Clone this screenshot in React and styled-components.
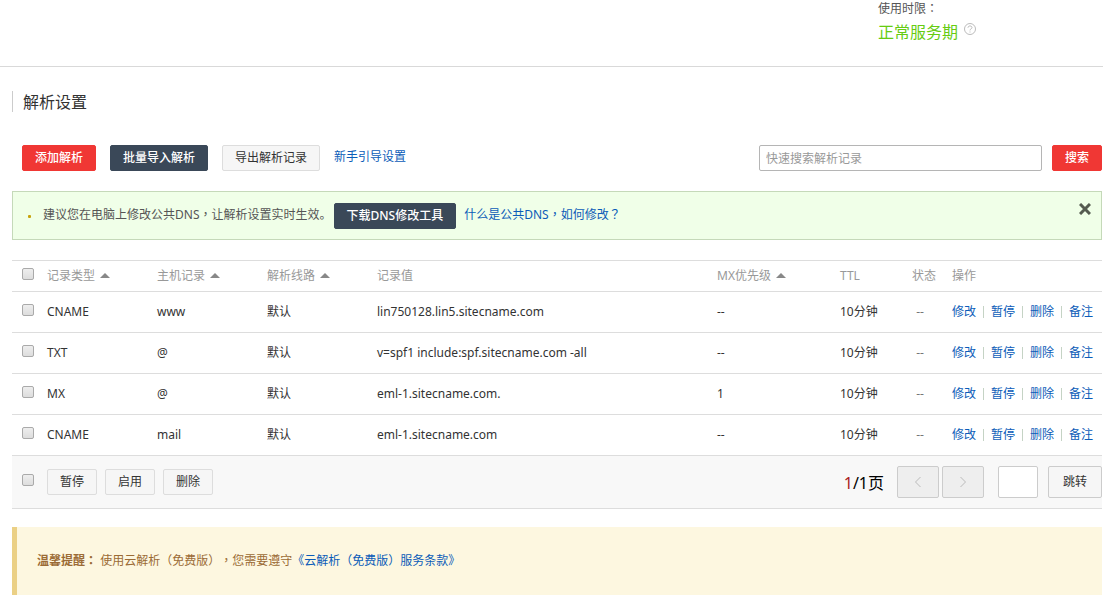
import { useState } from "react";
import styled, { createGlobalStyle, css } from "styled-components";

const GlobalStyle = createGlobalStyle`
  * {
    box-sizing: border-box;
  }
  body {
    margin: 0;
    background: #fff;
    color: #333;
    font: 12px/20px "Noto Sans", "Noto Sans CJK SC", sans-serif;
    text-spacing-trim: space-all;
  }
  button, input {
    font: inherit;
    color: inherit;
  }
  a {
    color: #0b5cb8;
    text-decoration: none;
  }
`;

const Page = styled.div`
  padding-right: 15px;
`;

const Status = styled.header`
  display: flex;
  justify-content: flex-end;
  height: 67px;
  border-bottom: 1px solid #d9d9d9;
`;

const StatusBox = styled.div`
  width: 225px;
  color: #555;
  line-height: 17px;
`;

const StatusValue = styled.div`
  display: flex;
  gap: 6px;
  color: #6c1;
  font-size: 16px;
  line-height: 30px;
`;

const HelpIcon = styled.svg`
  width: 12px;
  height: 12px;
  margin-top: 6px;
`;

const Content = styled.main`
  padding: 24px 1px 0 12px;
`;

const Title = styled.h1`
  margin: 0 0 33px;
  padding: 1px 0 0 10px;
  border-left: 1px solid #ccc;
  font-size: 16px;
  font-weight: 400;
  line-height: 20px;
`;

const Toolbar = styled.div`
  display: flex;
  align-items: flex-start;
  gap: 14px;
  padding-left: 10px;
  margin-bottom: 20px;
`;

const kinds = {
  red: css`
    background: #f03734;
    border-color: #f03734;
    color: #fff;
    font-weight: 500;
  `,
  dark: css`
    background: #3a4858;
    border-color: #3a4858;
    color: #fff;
    font-weight: 500;
  `,
  light: css`
    background: #f6f6f6;
    border-color: #ddd;
    color: #333;
  `,
};

const Button = styled.button`
  height: 26px;
  padding: 0 12px;
  border: 1px solid;
  border-radius: 2px;
  line-height: 24px;
  white-space: nowrap;
  cursor: pointer;
  ${(p) => kinds[p.$kind || "light"]}
`;

const GuideLink = styled.a`
  line-height: 24px;
`;

const Search = styled.form`
  display: flex;
  gap: 10px;
  margin-left: auto;
`;

const SearchInput = styled.input`
  width: 283px;
  height: 26px;
  padding: 0 6px;
  border: 1px solid #b5b5b5;
  border-radius: 2px;
  &::placeholder {
    color: #999;
  }
`;

const Tip = styled.div`
  display: flex;
  align-items: center;
  padding: 11px 10px 10px 15px;
  margin-bottom: 20px;
  border: 1px solid #c5d9b9;
  background: #f0ffe8;
  color: #555;
`;

const Dot = styled.i`
  width: 3px;
  height: 3px;
  margin-right: 12px;
  border-radius: 1px;
  background: #c9a30c;
`;

const TipText = styled.span`
  padding-bottom: 2px;
`;

const TipButton = styled(Button)`
  margin: 0 8px 0 2px;
`;

const Close = styled.button`
  display: flex;
  align-self: flex-start;
  margin-left: auto;
  padding: 0;
  border: 0;
  background: none;
  cursor: pointer;
`;

// centred full-width punctuation
const Punct = styled.span`
  font-family: "Noto Sans CJK TC", sans-serif;
  line-height: 1;
`;

const Table = styled.table`
  width: 100%;
  table-layout: fixed;
  border-collapse: collapse;
  border-top: 1px solid #ddd;
`;

const Col = styled.col`
  width: ${(p) => (p.$w ? p.$w + "px" : "auto")};
`;

const Th = styled.th`
  height: 31px;
  padding: 0;
  border-bottom: 1px solid #ddd;
  color: #999;
  font-weight: 400;
  text-align: left;
  white-space: nowrap;
`;

const Td = styled.td`
  height: 41px;
  padding: 0;
  border-bottom: 1px solid #ddd;
  white-space: nowrap;
`;

const StateTd = styled(Td)`
  padding-right: 24px;
  color: #777;
  text-align: center;
`;

const CheckWrap = styled.label`
  display: flex;
  padding: 0 0 5px 10px;
`;

const Check = styled.input`
  appearance: none;
  width: 12px;
  height: 12px;
  margin: 0;
  border: 1px solid #aaa;
  border-radius: 2px;
  background: linear-gradient(#eee, #ddd);
  &:checked {
    background: #3a4858;
  }
`;

const Arrow = styled.span`
  display: inline-block;
  margin-left: 5px;
  border: 5px solid transparent;
  border-top: 0;
  border-bottom-color: #888;
  vertical-align: 2px;
`;

const Actions = styled.div`
  display: flex;
  align-items: center;
`;

const Action = styled.a`
  & + & {
    margin-left: 7px;
    padding-left: 8px;
    background: linear-gradient(#c5d3c5, #c5d3c5) left center / 1px 12px no-repeat;
  }
`;

const Footer = styled.div`
  display: flex;
  align-items: center;
  height: 53px;
  margin-bottom: 18px;
  border-bottom: 1px solid #ddd;
  background: #f8f8f8;
`;

const FooterCheck = styled(CheckWrap)`
  width: 35px;
`;

const Bulk = styled.div`
  display: flex;
  gap: 8px;
`;

const Pager = styled.div`
  display: flex;
  align-items: center;
  margin-left: auto;
`;

const PageCount = styled.span`
  margin-right: 13px;
  padding-top: 1px;
  color: #000;
  font-size: 16px;
  b {
    color: #a22;
    font-weight: 400;
  }
`;

const PageButton = styled.button`
  display: flex;
  align-items: center;
  justify-content: center;
  width: 42px;
  height: 32px;
  margin-right: 3px;
  padding: 0;
  border: 1px solid #ccc;
  border-radius: 2px;
  background: #eee;
`;

const PageInput = styled.input`
  width: 40px;
  height: 32px;
  margin: 0 10px 0 11px;
  padding: 0 6px;
  border: 1px solid #ccc;
  border-radius: 2px;
  background: #fff;
`;

const JumpButton = styled(Button)`
  width: 54px;
  height: 32px;
  border-color: #ccc;
`;

const Notice = styled.p`
  margin: 0;
  padding: 24px 20px;
  border-left: 5px solid #ebd085;
  background: #fdf7e0;
  color: #9b6b35;
`;

const columns = [
  { label: "记录类型", sort: true },
  { label: "主机记录", sort: true },
  { label: "解析线路", sort: true },
  { label: "记录值" },
  { label: "MX优先级", sort: true },
  { label: "TTL" },
  { label: "状态" },
  { label: "操作" },
];

const widths = [35, 110, 110, 110, 0, 123, 72, 40, 150];

const records = [
  { type: "CNAME", host: "www", value: "lin750128.lin5.sitecname.com", mx: "--" },
  { type: "TXT", host: "@", value: "v=spf1 include:spf.sitecname.com -all", mx: "--" },
  { type: "MX", host: "@", value: "eml-1.sitecname.com.", mx: "1" },
  { type: "CNAME", host: "mail", value: "eml-1.sitecname.com", mx: "--" },
];

function Chevron({ d }) {
  return (
    <svg width="8" height="12" viewBox="0 0 8 12" fill="none" stroke="#bbb">
      <path d={d} />
    </svg>
  );
}

export default function App() {
  const [checked, setChecked] = useState(records.map(() => false));
  const all = checked.every(Boolean);
  const toggleAll = () => setChecked(records.map(() => !all));
  const toggle = (i) => setChecked(checked.map((c, n) => (n === i ? !c : c)));

  return (
    <Page>
      <GlobalStyle />
      <Status>
        <StatusBox>
          使用时限<Punct>：</Punct>
          <StatusValue>
            正常服务期
            <HelpIcon viewBox="0 0 12 12" fill="none" stroke="#bbb">
              <circle cx="6" cy="6" r="5.5" />
              <path d="M4 4.7C4 2.4 8 2.4 8 4.6C8 5.9 6 5.8 6 7.4M6 8.5V9.5" />
            </HelpIcon>
          </StatusValue>
        </StatusBox>
      </Status>

      <Content>
        <Title>解析设置</Title>
        <Toolbar>
          <Button $kind="red">添加解析</Button>
          <Button $kind="dark">批量导入解析</Button>
          <Button>导出解析记录</Button>
          <GuideLink href="#">新手引导设置</GuideLink>
          <Search onSubmit={(e) => e.preventDefault()}>
            <SearchInput aria-label="搜索" placeholder="快速搜索解析记录" />
            <Button $kind="red">搜索</Button>
          </Search>
        </Toolbar>

        <Tip>
          <Dot />
          <TipText>
            建议您在电脑上修改公共DNS<Punct>，</Punct>让解析设置实时生效。
          </TipText>
          <TipButton $kind="dark">下载DNS修改工具</TipButton>
          <TipText>
            <a href="#">
              什么是公共DNS<Punct>，</Punct>如何修改<Punct>？</Punct>
            </a>
          </TipText>
          <Close aria-label="关闭">
            <svg width="12" height="12" viewBox="0 0 12 12" stroke="#555b50" strokeWidth="3">
              <path d="M1 1L11 11M11 1L1 11" />
            </svg>
          </Close>
        </Tip>

        <Table>
          <colgroup>
            {widths.map((w, i) => (
              <Col key={i} $w={w} />
            ))}
          </colgroup>
          <thead>
            <tr>
              <Th>
                <CheckWrap>
                  <Check type="checkbox" aria-label="全选" checked={all} onChange={toggleAll} />
                </CheckWrap>
              </Th>
              {columns.map((c) => (
                <Th key={c.label}>
                  {c.label}
                  {c.sort && <Arrow />}
                </Th>
              ))}
            </tr>
          </thead>
          <tbody>
            {records.map((r, i) => (
              <tr key={i}>
                <Td>
                  <CheckWrap>
                    <Check
                      type="checkbox"
                      aria-label={r.type}
                      checked={checked[i]}
                      onChange={() => toggle(i)}
                    />
                  </CheckWrap>
                </Td>
                <Td>{r.type}</Td>
                <Td>{r.host}</Td>
                <Td>默认</Td>
                <Td>{r.value}</Td>
                <Td>{r.mx}</Td>
                <Td>10分钟</Td>
                <StateTd>--</StateTd>
                <Td>
                  <Actions>
                    <Action href="#">修改</Action>
                    <Action href="#">暂停</Action>
                    <Action href="#">删除</Action>
                    <Action href="#">备注</Action>
                  </Actions>
                </Td>
              </tr>
            ))}
          </tbody>
        </Table>

        <Footer>
          <FooterCheck>
            <Check type="checkbox" aria-label="全选" checked={all} onChange={toggleAll} />
          </FooterCheck>
          <Bulk>
            <Button>暂停</Button>
            <Button>启用</Button>
            <Button>删除</Button>
          </Bulk>
          <Pager>
            <PageCount>
              <b>1</b>/1页
            </PageCount>
            <PageButton disabled aria-label="上一页">
              <Chevron d="M6.5 1L1.5 6L6.5 11" />
            </PageButton>
            <PageButton disabled aria-label="下一页">
              <Chevron d="M1.5 1L6.5 6L1.5 11" />
            </PageButton>
            <PageInput aria-label="页码" />
            <JumpButton>跳转</JumpButton>
          </Pager>
        </Footer>

        <Notice>
          <strong>
            温馨提醒<Punct>：</Punct>
          </strong>{" "}
          使用云解析<Punct>（</Punct>免费版<Punct>），</Punct>您需要遵守
          <a href="#">
            《云解析<Punct>（</Punct>免费版<Punct>）</Punct>服务条款》
          </a>
        </Notice>
      </Content>
    </Page>
  );
}
